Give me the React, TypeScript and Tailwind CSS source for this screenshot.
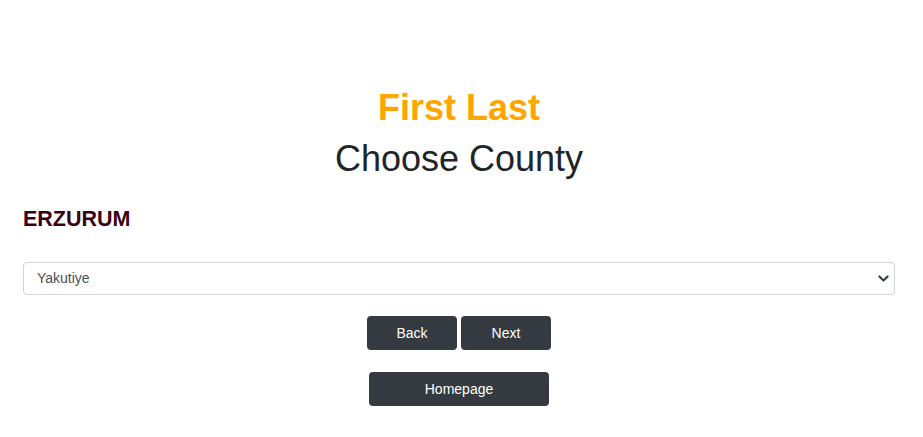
export default function App() {
  const counties = ["Yakutiye", "Palandöken", "Aziziye", "Oltu", "Horasan"];

  return (
    <div className="min-h-[437px] bg-white font-['Liberation_Sans',Arial,sans-serif] text-[#212529]">
      <div className="pt-[86px] pl-[23px] pr-[28px]">
        <div className="text-center">
          <h1 className="text-[36px] leading-[43px] font-bold text-[#ffa500] mb-2">First Last</h1>
          <h1 className="text-[36px] leading-[43px] font-normal">Choose County</h1>
        </div>

        <h5 className="mt-[27px] text-[21.5px] leading-[25px] font-bold text-[#3a0014]">ERZURUM</h5>

        <div className="mt-[30px] relative">
          <select
            defaultValue="Yakutiye"
            className="w-full h-[33px] appearance-none rounded border border-[#ced4da] bg-white pl-[13px] pr-8 text-[14px] text-[#495057] outline-none"
          >
            {counties.map((c) => (
              <option key={c} value={c}>
                {c}
              </option>
            ))}
          </select>
          <svg
            className="pointer-events-none absolute right-[6px] top-[11px] w-[11px] h-[11px]"
            viewBox="0 0 16 16"
            fill="none"
            stroke="#343a40"
            strokeWidth="3"
            strokeLinecap="round"
            strokeLinejoin="round"
          >
            <path d="M2 5l6 6 6-6" />
          </svg>
        </div>

        <div className="mt-[21px] flex justify-center gap-1">
          <button className="w-[90px] h-[34px] rounded bg-[#343a40] text-white text-[14px]">Back</button>
          <button className="w-[90px] h-[34px] rounded bg-[#343a40] text-white text-[14px]">Next</button>
        </div>

        <div className="mt-[22px] flex justify-center">
          <button className="w-[180px] h-[34px] rounded bg-[#343a40] text-white text-[14px]">Homepage</button>
        </div>
      </div>
    </div>
  );
}
